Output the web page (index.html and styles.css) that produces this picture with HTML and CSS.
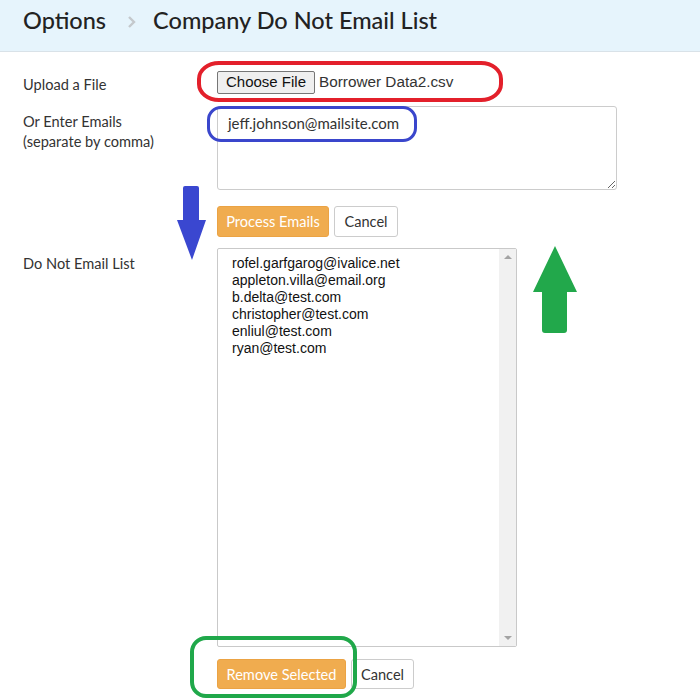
FILE: index.html
```html
<!DOCTYPE html>
<html>
<head>
<meta charset="utf-8">
<link rel="stylesheet" href="styles.css">
</head>
<body>
<div class="page">
  <header class="topbar">
    <h1 class="crumbs">
      <span class="crumb">Options</span>
      <svg class="chev" width="10" height="14" viewBox="0 0 10 14"><path d="M2 2 L7 7 L2 12" fill="none" stroke="#c4c8cc" stroke-width="2.4"/></svg>
      <span class="crumb">Company Do Not Email List</span>
    </h1>
  </header>

  <main class="form">
    <div class="row row-file">
      <div class="label">Upload a File</div>
      <div class="field file">
        <span class="file-btn">Choose File</span>
        <span class="file-name">Borrower Data2.csv</span>
      </div>
    </div>

    <div class="row row-text">
      <div class="label">Or Enter Emails<br>(separate by comma)</div>
      <div class="field">
        <textarea class="emails">jeff.johnson@mailsite.com</textarea>
      </div>
    </div>

    <div class="row row-btns1">
      <div class="label"></div>
      <div class="field btns">
        <button class="btn btn-primary process">Process Emails</button>
        <button class="btn btn-default">Cancel</button>
      </div>
    </div>

    <div class="row row-list">
      <div class="label">Do Not Email List</div>
      <div class="field">
        <div class="listbox">
          <ul class="items">
            <li>rofel.garfgarog@ivalice.net</li>
            <li>appleton.villa@email.org</li>
            <li>b.delta@test.com</li>
            <li>christopher@test.com</li>
            <li>enliul@test.com</li>
            <li>ryan@test.com</li>
          </ul>
          <div class="scrollbar">
            <span class="sb-arrow up"></span>
            <span class="sb-arrow down"></span>
          </div>
        </div>
      </div>
    </div>

    <div class="row row-btns2">
      <div class="label"></div>
      <div class="field btns">
        <button class="btn btn-primary remove">Remove Selected</button>
        <button class="btn btn-default cancel2">Cancel</button>
      </div>
    </div>
  </main>

  <!-- annotations -->
  <div class="mark mark-red"></div>
  <div class="mark mark-blue"></div>
  <div class="mark mark-green"></div>
  <svg class="arrow arrow-blue" width="32" height="76" viewBox="0 0 32 76">
    <path d="M7 2 Q7 0 9 0 L21 0 Q23 0 23 2 L23 34 L30 34 L16 74 L1 34 L7 34 Z" fill="#3a47d0"/>
  </svg>
  <svg class="arrow arrow-green" width="46" height="90" viewBox="0 0 46 90">
    <path d="M23 1 L45 47 L35 47 L35 85 Q35 88 32 88 L13 88 Q10 88 10 85 L10 47 L1 47 Z" fill="#22a84b"/>
  </svg>
</div>
</body>
</html>
```

FILE: styles.css
```css
* { box-sizing: border-box; }
html, body { margin: 0; padding: 0; background: #fff; }
body {
  font-family: Lato, "Open Sans", "Liberation Sans", sans-serif;
  color: #333;
}
.page { position: relative; width: 700px; height: 700px; overflow: hidden; }

.topbar {
  height: 52px;
  background: #e6f4fc;
  border-bottom: 1px solid #d9e2e8;
  padding: 6px 23px 0;
  display: flex;
  align-items: flex-start;
}
.crumbs {
  margin: 0;
  display: flex;
  align-items: center;
  font-size: 23.5px;
  line-height: 29px;
  font-weight: 500;
  color: #222;
}
.chev { margin: 2px 16px 0 21px; }

.form { padding: 17px 0 0 23px; }
.row {
  display: grid;
  grid-template-columns: 194px 1fr;
}
.label { font-size: 14.6px; line-height: 20px; color: #333; }

.row-file { height: 23px; }
.row-file .label { padding-top: 6px; }
.file { display: flex; align-items: center; font-family: "Liberation Sans", Arial, sans-serif; }
.file-btn {
  display: inline-block;
  height: 23px;
  line-height: 20px;
  padding: 0 8px;
  font-size: 15px;
  color: #111;
  background: #efefef;
  border: 1px solid #767676;
  border-radius: 2px;
}
.file-name { margin-left: 4px; font-size: 15.3px; color: #333; }

.row-text { margin-top: 14px; }
.row-text .label { padding-top: 6px; }
.emails {
  display: block;
  width: 400px;
  height: 84px;
  margin: 0;
  border: 1px solid #ccc;
  border-radius: 3px;
  padding: 6px 10px;
  font-family: Lato, "Open Sans", sans-serif;
  font-size: 15px;
  line-height: 20px;
  color: #333;
  resize: vertical;
}

.row-btns1 { margin-top: 16px; }
.btns { display: flex; gap: 5px; }
.btn {
  height: 31px;
  padding: 0;
  font-family: Lato, "Open Sans", sans-serif;
  font-size: 14.6px;
  white-space: nowrap;
  border-radius: 3px;
  cursor: pointer;
}
.btn-primary { background: #f0ac4f; border: 1px solid #eba344; color: #fff; }
.btn-default { background: #fff; border: 1px solid #ccc; color: #333; }
.process { width: 112px; }
.row-btns1 .btn-default { width: 64px; }

.row-list { margin-top: 11px; }
.row-list .label { padding-top: 6px; }
.listbox {
  position: relative;
  width: 300px;
  height: 399px;
  border: 1px solid #c9c9c9;
  border-radius: 2px;
  display: flex;
}
.items {
  flex: 1;
  list-style: none;
  margin: 0;
  padding: 6px 0 0 14px;
  font-family: "Liberation Sans", Arial, sans-serif;
  font-size: 14px;
  line-height: 17px;
  color: #111;
}
.scrollbar {
  width: 17px;
  background: #f1f1f1;
  display: flex;
  flex-direction: column;
  justify-content: space-between;
  align-items: center;
  padding: 6px 0;
}
.sb-arrow { width: 0; height: 0; border-left: 4px solid transparent; border-right: 4px solid transparent; }
.sb-arrow.up { border-bottom: 4px solid #a3a3a3; }
.sb-arrow.down { border-top: 4px solid #a3a3a3; }

.row-btns2 { margin-top: 12px; }
.row-btns2 .btn { height: 30px; }
.remove { width: 129px; }
.cancel2 { width: 63px; }

/* annotation overlays */
.mark { position: absolute; pointer-events: none; }
.mark-red {
  left: 197px; top: 61px; width: 306px; height: 41px;
  border: 4px solid #e3202b;
  border-radius: 22px / 18px;
}
.mark-blue {
  left: 207px; top: 106px; width: 210px; height: 36px;
  border: 3px solid #3a46cc;
  border-radius: 14px;
}
.mark-green {
  left: 190px; top: 636px; width: 167px; height: 62px;
  border: 4px solid #20a84a;
  border-radius: 16px;
}
.arrow { position: absolute; }
.arrow-blue { left: 176px; top: 186px; }
.arrow-green { left: 532px; top: 245px; }
```
